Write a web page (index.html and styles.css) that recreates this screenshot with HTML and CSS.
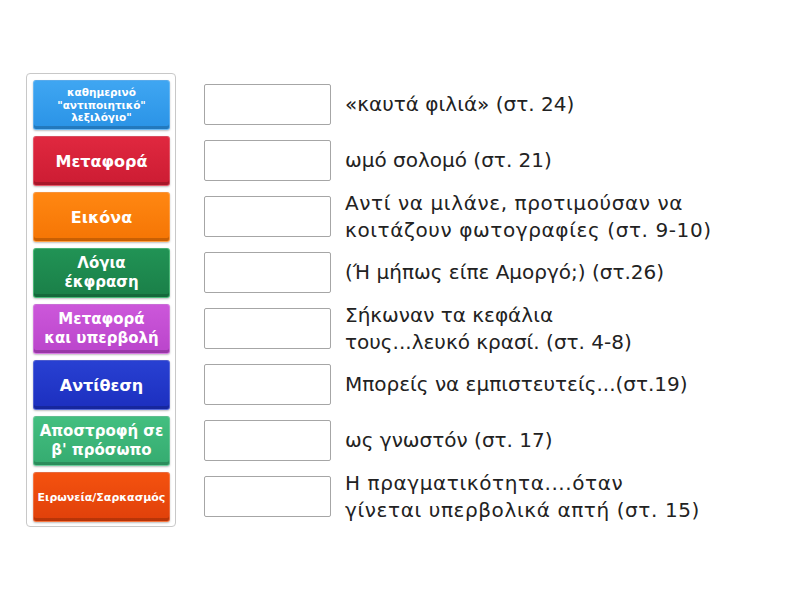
FILE: index.html
```html
<!DOCTYPE html>
<html lang="el">
<head>
<meta charset="utf-8">
<link rel="stylesheet" href="styles.css">
</head>
<body>
<div class="game">
  <div class="bank">
    <div class="tile t-blue small">καθημερινό<br>"αντιποιητικό"<br>λεξιλόγιο"</div>
    <div class="tile t-red big">Μεταφορά</div>
    <div class="tile t-orange big">Εικόνα</div>
    <div class="tile t-green">Λόγια<br>έκφραση</div>
    <div class="tile t-pink">Μεταφορά<br>και υπερβολή</div>
    <div class="tile t-navy big">Αντίθεση</div>
    <div class="tile t-teal">Αποστροφή σε<br>β' πρόσωπο</div>
    <div class="tile t-flame smaller">Ειρωνεία/Σαρκασμός</div>
  </div>
  <div class="rows">
    <div class="row"><div class="slot"></div><div class="clue">«καυτά φιλιά» (στ. 24)</div></div>
    <div class="row"><div class="slot"></div><div class="clue">ωμό σολομό (στ. 21)</div></div>
    <div class="row"><div class="slot"></div><div class="clue wide">Αντί να μιλάνε, προτιμούσαν να<br>κοιτάζουν φωτογραφίες (στ. 9-10)</div></div>
    <div class="row"><div class="slot"></div><div class="clue">(Ή μήπως είπε Αμοργό;) (στ.26)</div></div>
    <div class="row"><div class="slot"></div><div class="clue">Σήκωναν τα κεφάλια<br>τους...λευκό κρασί. (στ. 4-8)</div></div>
    <div class="row"><div class="slot"></div><div class="clue">Μπορείς να εμπιστευτείς...(στ.19)</div></div>
    <div class="row"><div class="slot"></div><div class="clue">ως γνωστόν (στ. 17)</div></div>
    <div class="row"><div class="slot"></div><div class="clue wide">Η πραγματικότητα....όταν<br>γίνεται υπερβολικά απτή (στ. 15)</div></div>
  </div>
</div>
</body>
</html>
```
FILE: styles.css
```css
html, body {
  margin: 0;
  padding: 0;
  background: #ffffff;
}
body {
  width: 800px;
  height: 600px;
  font-family: "DejaVu Sans", "Noto Sans", sans-serif;
}
.game {
  display: flex;
  align-items: flex-start;
  padding: 73px 0 0 26px;
}
.bank {
  width: 137px;
  padding: 6px 5px 4px 6px;
  border: 1px solid #c8c8c8;
  border-radius: 4px;
  display: flex;
  flex-direction: column;
  gap: 6px;
}
.tile {
  height: 50px;
  box-sizing: border-box;
  border-radius: 3px;
  display: flex;
  align-items: center;
  justify-content: center;
  text-align: center;
  color: #fff;
  font-family: "DejaVu Sans", "Noto Sans", sans-serif;
  font-weight: 700;
  font-size: 15px;
  line-height: 19px;
  padding: 0 1px;
  white-space: nowrap;
  border: 1px solid rgba(255,255,255,0.22);
  box-shadow: inset 0 -3px 0 rgba(0,0,0,0.18), 0 1px 2px rgba(0,0,0,0.25);
}
.tile.big {
  font-size: 16px;
}
.tile.small {
  font-size: 10.5px;
  line-height: 12.5px;
}
.tile.smaller {
  font-size: 11px;
}
.t-blue   { background: linear-gradient(#3fa6f2, #2a93e6); }
.t-red    { background: linear-gradient(#e0283f, #cc1c33); }
.t-orange { background: linear-gradient(#ff8712, #f57504); }
.t-green  { background: linear-gradient(#219355, #1a7f48); border-color: rgba(120,230,160,0.5); }
.t-pink   { background: linear-gradient(#cc57da, #ba45cb); }
.t-navy   { background: linear-gradient(#2840d2, #1c2fbf); }
.t-teal   { background: linear-gradient(#43bf80, #35ab70); }
.t-flame  { background: linear-gradient(#f4520f, #e0400a); }

.rows {
  margin-left: 28px;
  padding-top: 11px;
  display: flex;
  flex-direction: column;
  gap: 15px;
}
.row {
  display: flex;
  align-items: center;
  height: 41px;
}
.slot {
  width: 125px;
  height: 39px;
  border: 1px solid #a6a6a6;
  border-radius: 2px;
  flex: none;
}
.clue {
  margin-left: 14px;
  white-space: nowrap;
  font-size: 20px;
  line-height: 27px;
  color: #222;
}
.clue.wide {
  letter-spacing: 0.6px;
}
```
